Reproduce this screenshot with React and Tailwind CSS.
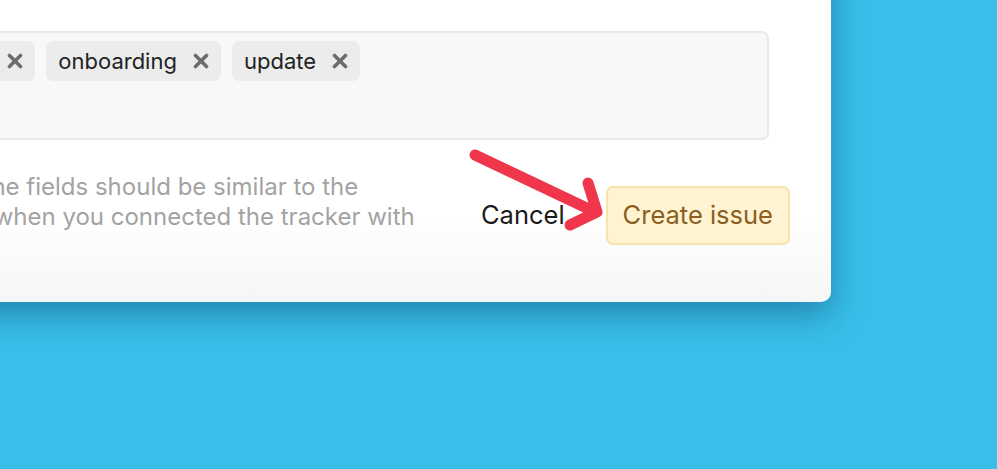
function Tag({ label }) {
    return (
        <div className="flex h-[40px] shrink-0 items-center gap-[16px] rounded-[7px] bg-[#ececec] pl-[12px] pr-[12px]">
            <span className="text-[22px] leading-none text-[#222]">{label}</span>
            <svg width="16" height="16" viewBox="0 0 16 16" className="text-[#6d6d6d]">
                <path d="M2.5 2.5 L13.5 13.5 M13.5 2.5 L2.5 13.5" stroke="currentColor" strokeWidth="3.6" strokeLinecap="round" />
            </svg>
        </div>
    );
}

export default function App() {
    return (
        <div className="relative h-[469px] w-[997px] overflow-hidden bg-[#38bfe9] font-['Inter',sans-serif]">
            {/* Modal */}
            <div className="-ml-[167px] -mt-[40px] w-[998px] rounded-[10px] bg-[linear-gradient(to_bottom,#ffffff_75%,#f6f6f6)] pl-[41px] pr-[41px] pt-[71px] pb-[57px] shadow-[0_12px_34px_rgba(10,60,100,0.45)]">
                {/* Labels input */}
                <div className="mr-[21px] flex h-[109px] items-start gap-[11px] rounded-[7px] border-2 border-[#e9e9e9] bg-[#f8f8f8] py-[8px] pl-[6px] pr-[8px]">
                    <Tag label="feedback" />
                    <Tag label="onboarding" />
                    <Tag label="update" />
                </div>

                {/* Footer */}
                <div className="mt-[32px] flex items-start justify-between">
                    <div className="whitespace-nowrap text-[24px] leading-[30px] text-[#a3a3a3]">
                        <div className="-ml-[53px]">The names of the fields should be similar to the</div>
                        <div className="-ml-[53px]">ones you used when you connected the tracker with</div>
                    </div>
                    <div className="mt-[14px] flex items-center gap-[41px]">
                        <button className="text-[25.5px] text-[#1a1a1a]">Cancel</button>
                        <button className="h-[59px] rounded-[7px] border-2 border-[#f6e4ab] bg-[#fff3d2] px-[15px] text-[25.5px] text-[#8b5e22]">
                            Create issue
                        </button>
                    </div>
                </div>
            </div>

            {/* Annotation arrow */}
            <svg className="absolute left-[460px] top-[140px]" width="160" height="110" viewBox="0 0 160 110">
                <g fill="none" stroke="#f0364a" strokeWidth="11" strokeLinecap="round" strokeLinejoin="round">
                    <path d="M15 15 L135 72" />
                    <path d="M128 43 L137 72 L110 85" />
                </g>
            </svg>
        </div>
    );
}
